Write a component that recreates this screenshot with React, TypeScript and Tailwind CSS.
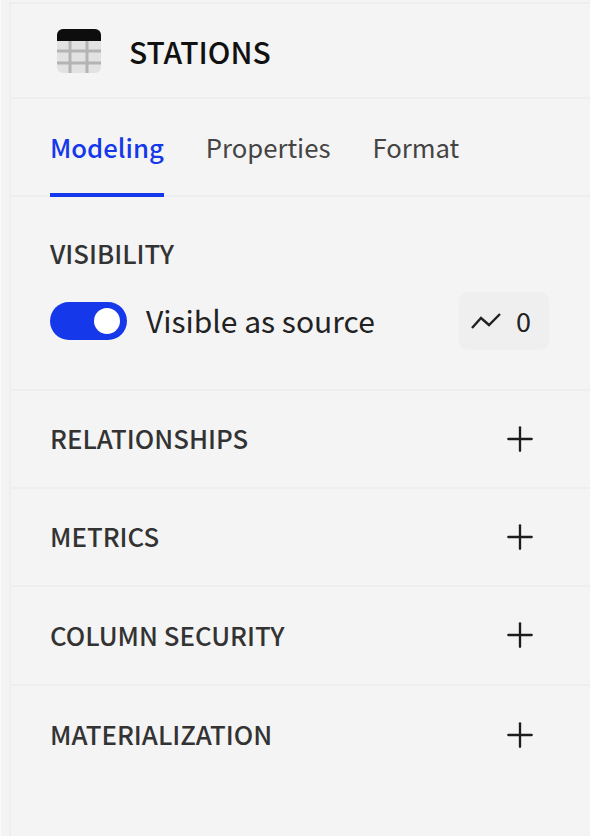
import { Plus } from 'lucide-react';

const sections = ['RELATIONSHIPS', 'METRICS', 'COLUMN SECURITY', 'MATERIALIZATION'];

function TableIcon() {
  return (
    <svg width="44" height="44" viewBox="0 0 44 44" className="block">
      <rect x="0" y="0" width="44" height="44" rx="6" fill="#e2e2e2" />
      <path d="M0 12V6a6 6 0 0 1 6-6h32a6 6 0 0 1 6 6v6z" fill="#0d0d0d" />
      <path d="M0 22h44M0 34h44M13 12v32M30 12v32" stroke="#b4b4b4" strokeWidth="3" fill="none" />
    </svg>
  );
}

export default function App() {
  return (
    <div className="h-[836px] w-[590px] overflow-hidden border-l border-[#fafafa] bg-[#f4f4f4] pl-[8px] pt-[2px] font-['Noto_Sans_CJK_SC','Noto_Sans',sans-serif]">
      <div className="h-full border-l-2 border-t-2 border-[#eeeeee]">
        <div className="flex h-[95px] items-center border-b-2 border-[#eeeeee] pl-[46px] pt-[1px]">
          <TableIcon />
          <h1 className="ml-[28px] text-[30px] leading-none font-medium text-[#111111]">STATIONS</h1>
        </div>

        <div className="flex h-[98px] items-stretch gap-[42px] border-b-2 border-[#eeeeee] pl-[39px] text-[25.7px]">
          <div className="-mb-[2px] flex items-center border-b-[4px] border-[#1539ea] pt-[2px] font-medium text-[#1539ea]">Modeling</div>
          <div className="flex items-center text-[#444444]">Properties</div>
          <div className="flex items-center text-[#444444]">Format</div>
        </div>

        <div className="h-[194px] border-b-2 border-[#eeeeee] pl-[39px] pr-[41px] pt-[43px]">
          <div className="text-[25.8px] leading-none font-medium text-[#333333]">VISIBILITY</div>
          <div className="mt-[26px] flex items-center">
            <div className="flex h-[38px] w-[77px] items-center justify-end rounded-full bg-[#1539ea] pr-[7px]">
              <div className="h-[26px] w-[26px] rounded-full bg-white" />
            </div>
            <span className="ml-[19px] pb-[2px] text-[30px] leading-none text-[#222222]">Visible as source</span>
            <div className="ml-auto flex h-[58px] w-[90px] items-center justify-center gap-[15px] rounded-[9px] bg-[#efefef] pr-[6px]">
              <svg width="30" height="18" viewBox="0 0 30 18" fill="none" stroke="#222222" strokeWidth="2.4">
                <path d="M1 16 10 6 18 13 29 2" />
              </svg>
              <span className="text-[27px] leading-none text-[#222222]">0</span>
            </div>
          </div>
        </div>

        {sections.map((name) => (
          <div key={name} className="flex h-[98.2px] items-center justify-between border-b-2 border-[#eeeeee] pl-[39px] pr-[50px] last:border-b-0">
            <span className="pb-[2px] text-[25.8px] leading-none font-medium text-[#333333]">{name}</span>
            <Plus size={40} strokeWidth={1.4} color="#1c1c1c" />
          </div>
        ))}
      </div>
    </div>
  );
}
